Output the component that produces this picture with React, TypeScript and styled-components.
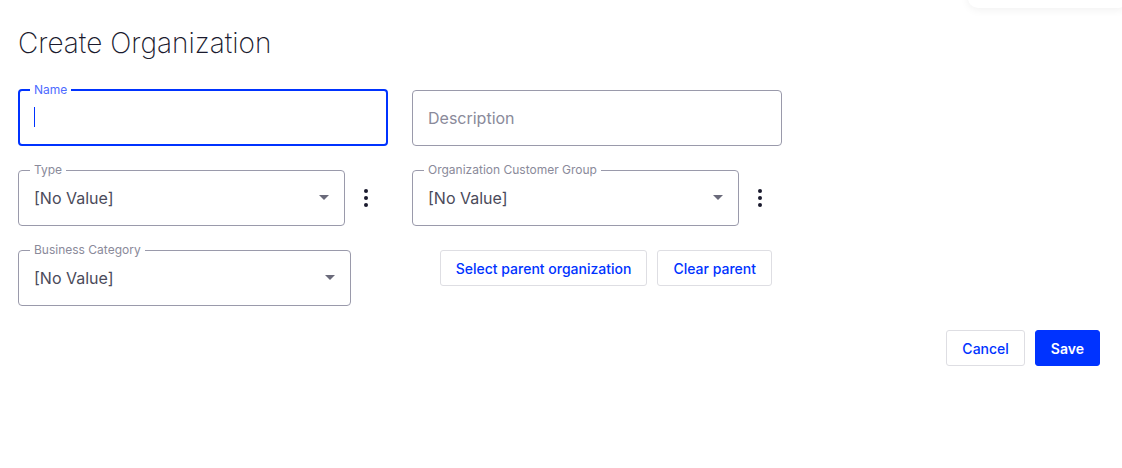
import React from "react";
import styled, { createGlobalStyle } from "styled-components";

const Global = createGlobalStyle`
  body { margin: 0; background: #fff; font-family: Inter, "Noto Sans", sans-serif; }
`;

const Page = styled.div`
  position: relative;
  width: 1122px;
  height: 468px;
  padding: 0 22px 0 18px;
  box-sizing: border-box;
`;

const Shade = styled.div`
  position: absolute;
  top: -20px;
  left: 968px;
  width: 160px;
  height: 28px;
  border-radius: 10px;
  box-shadow: 0 2px 8px rgba(0,0,0,0.06);
  background: #fff;
`;

const Title = styled.h1`
  margin: 0;
  padding-top: 26px;
  height: 90px;
  box-sizing: border-box;
  font-size: 28px;
  font-weight: 200;
  color: #1a1a2e;
  line-height: 34px;
`;

const Grid = styled.div`
  display: grid;
  grid-template-columns: 370px 370px;
  column-gap: 24px;
  row-gap: 24px;
`;

const Cell = styled.div`
  display: flex;
  align-items: center;
`;

const Field = styled.fieldset<{ $focus?: boolean; $w?: number; $plain?: boolean }>`
  margin: 0;
  box-sizing: border-box;
  width: ${(p) => p.$w ?? 370}px;
  height: ${(p) => (p.$plain ? 56 : 61)}px;
  margin-top: ${(p) => (p.$plain ? 0 : -5)}px;
  border: ${(p) => (p.$focus ? "2px solid #0033ff" : "1px solid #9a9aab")};
  border-radius: 4px;
  padding: 0 ${(p) => (p.$focus ? 14 : 15)}px;
  display: flex;
  align-items: center;
`;

const Legend = styled.legend<{ $focus?: boolean }>`
  font-size: 12px;
  color: ${(p) => (p.$focus ? "#4d6bff" : "#8a8a9a")};
  padding: 0 4px;
  margin-left: -4px;
  line-height: 10px;
`;

const Value = styled.span<{ $ph?: boolean }>`
  flex: 1;
  font-size: 16px;
  color: ${(p) => (p.$ph ? "#8a8a9a" : "#4a4a5a")};
  margin-top: ${(p) => (p.$ph ? 0 : -5)}px;
`;

const Caret = styled.span`
  width: 1px;
  height: 20px;
  background: #0033ff;
  margin-top: -5px;
`;

const Arrow = styled.span`
  width: 0;
  height: 0;
  border-left: 5px solid transparent;
  border-right: 5px solid transparent;
  border-top: 5px solid #6a6a7a;
  margin-top: -5px;
`;

const Kebab = styled.div`
  width: 44px;
  display: flex;
  justify-content: center;
`;

const Actions = styled.div`
  display: flex;
  justify-content: flex-end;
  align-items: flex-start;
  gap: 10px;
  padding-right: 10px;
`;

const Btn = styled.button<{ $primary?: boolean }>`
  height: 36px;
  padding: 0 15px;
  border-radius: 3px;
  white-space: nowrap;
  font-family: Inter, sans-serif;
  font-weight: ${(p) => (p.$primary ? 600 : 500)};
  font-size: 14px;
  cursor: pointer;
  border: 1px solid ${(p) => (p.$primary ? "#0033ff" : "#dedee3")};
  background: ${(p) => (p.$primary ? "#0033ff" : "#fff")};
  color: ${(p) => (p.$primary ? "#fff" : "#0033ff")};
`;

const Footer = styled.div`
  display: flex;
  justify-content: flex-end;
  gap: 10px;
  margin-top: 24px;
`;

const Dots = () => (
  <svg width="4" height="18" viewBox="0 0 4 18">
    <circle cx="2" cy="2" r="2" fill="#1a1a2e" />
    <circle cx="2" cy="9" r="2" fill="#1a1a2e" />
    <circle cx="2" cy="16" r="2" fill="#1a1a2e" />
  </svg>
);

const Select = ({ label, kebab = true }: { label: string; kebab?: boolean }) => (
  <Cell>
    <Field $w={333}>
      <Legend>{label}</Legend>
      <Value>[No Value]</Value>
      <Arrow />
    </Field>
    {kebab && <Kebab><Dots /></Kebab>}
  </Cell>
);

export default function App() {
  return (
    <Page>
      <Global />
      <Shade />
      <Title>Create Organization</Title>
      <Grid>
        <Cell>
          <Field $focus>
            <Legend $focus>Name</Legend>
            <Caret />
          </Field>
        </Cell>
        <Cell>
          <Field $plain>
            <Value $ph>Description</Value>
          </Field>
        </Cell>
        <Select label="Type" />
        <Select label="Organization Customer Group" />
        <Select label="Business Category" kebab={false} />
        <Actions>
          <Btn>Select parent organization</Btn>
          <Btn>Clear parent</Btn>
        </Actions>
      </Grid>
      <Footer>
        <Btn>Cancel</Btn>
        <Btn $primary>Save</Btn>
      </Footer>
    </Page>
  );
}
